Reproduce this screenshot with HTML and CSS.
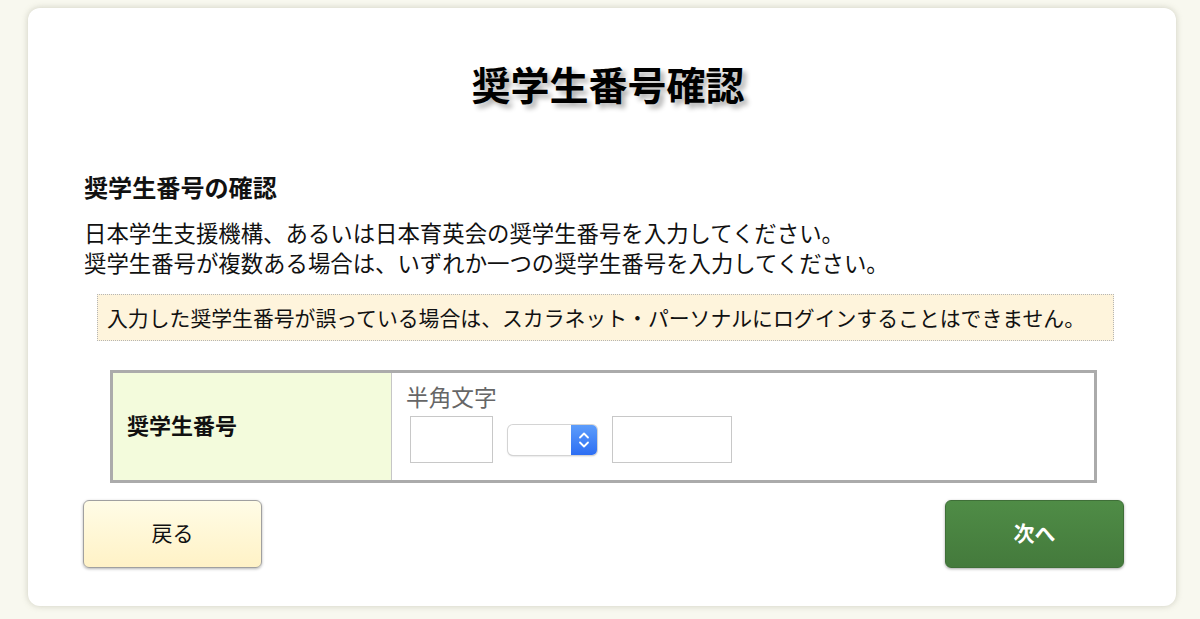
FILE: index.html
```html
<!DOCTYPE html>
<html lang="ja">
<head>
<meta charset="utf-8">
<title>奨学生番号確認</title>
<link rel="stylesheet" href="styles.css">
</head>
<body>
<main class="card">
  <h1 class="title">奨学生番号確認</h1>
  <h2 class="heading">奨学生番号の確認</h2>
  <p class="lead">日本学生支援機構、あるいは日本育英会の奨学生番号を入力してください。<br>奨学生番号が複数ある場合は、いずれか一つの奨学生番号を入力してください。</p>
  <div class="notice">入力した奨学生番号が誤っている場合は、スカラネット・パーソナルにログインすることはできません。</div>
  <div class="form-table">
    <div class="label-cell">奨学生番号</div>
    <div class="field-cell">
      <div class="hint">半角文字</div>
      <div class="inputs">
        <input class="box box-short" type="text">
        <div class="select">
          <span class="select-value"></span>
          <span class="select-btn">
            <svg width="14" height="22" viewBox="0 0 14 22" aria-hidden="true">
              <path d="M3 8.5 L7 4.5 L11 8.5" fill="none" stroke="#fff" stroke-width="1.8" stroke-linecap="round" stroke-linejoin="round"/>
              <path d="M3 13.5 L7 17.5 L11 13.5" fill="none" stroke="#fff" stroke-width="1.8" stroke-linecap="round" stroke-linejoin="round"/>
            </svg>
          </span>
        </div>
        <input class="box box-long" type="text">
      </div>
    </div>
  </div>
  <div class="actions">
    <button class="btn btn-back" type="button">戻る</button>
    <button class="btn btn-next" type="button">次へ</button>
  </div>
</main>
</body>
</html>
```
FILE: styles.css
```css
* { box-sizing: border-box; }
html, body { margin: 0; padding: 0; }
body {
  background: #f8f8ef;
  font-family: "Noto Sans CJK JP", "Noto Sans", sans-serif;
  color: #111;
  height: 619px;
  overflow: hidden;
}
.card {
  width: 1148px;
  margin: 8px 0 0 28px;
  background: #fff;
  border-radius: 12px;
  box-shadow: 0 0 6px rgba(150, 150, 130, 0.45);
  padding: 52px 52px 38px 56px;
}
.title {
  margin: 0;
  text-align: center;
  font-size: 39px;
  line-height: 47px;
  font-weight: 700;
  color: #000;
  text-shadow: 4px 4px 5px #b0b0b0;
  padding-left: 8px;
}
.heading {
  margin: 65px 0 0;
  font-size: 24.1px;
  line-height: 30px;
  font-weight: 700;
}
.lead {
  margin: 15px 0 0;
  font-size: 22.4px;
  line-height: 30px;
}
.notice {
  margin: 17px 10px 0 13px;
  height: 47px;
  background: #fef4dc;
  border: 1px dotted #b5b5b5;
  font-size: 20.85px;
  line-height: 45px;
  padding-left: 9px;
}
.form-table {
  margin: 29px 27px 0 26px;
  height: 113px;
  border: 3px solid #ababab;
  display: flex;
}
.label-cell {
  width: 279px;
  background: #f3fbdc;
  border-right: 1px solid #c6c6c6;
  font-size: 22px;
  font-weight: 700;
  display: flex;
  align-items: center;
  padding-left: 14px;
  padding-bottom: 6px;
}
.field-cell {
  flex: 1;
  padding: 10px 0 0 14px;
}
.hint {
  font-size: 22.7px;
  line-height: 28px;
  color: #666;
}
.inputs {
  margin-top: 5px;
  padding-left: 4px;
  display: flex;
  align-items: center;
}
.box {
  height: 47px;
  border: 1px solid #c8c8c8;
  background: #fff;
  margin: 0;
  padding: 0;
  font: inherit;
}
.box-short { width: 83px; }
.box-long { width: 120px; margin-left: 15px; }
.select {
  margin-left: 15px;
  width: 89px;
  height: 30px;
  border-radius: 5px;
  background: #fff;
  box-shadow: 0 0 0 1px #d4d4d4, 0 1px 2px rgba(0,0,0,0.25);
  display: flex;
  overflow: hidden;
}
.select-value { flex: 1; }
.select-btn {
  width: 26px;
  background: linear-gradient(#5d9dfb, #2d6ef3);
  display: flex;
  align-items: center;
  justify-content: center;
}
.actions {
  margin-top: 17px;
  display: flex;
  justify-content: space-between;
}
.btn {
  width: 179px;
  height: 68px;
  border-radius: 6px;
  font-family: inherit;
  font-size: 21px;
  padding: 0 0 5px;
  cursor: pointer;
}
.btn-back {
  margin-left: -1px;
  background: linear-gradient(#fffce6, #fff2c6);
  border: 1px solid #a0a0a0;
  box-shadow: 0 1px 3px rgba(0,0,0,0.3);
  color: #111;
}
.btn-next {
  background: linear-gradient(#4f8c46, #447a3c);
  border: 1px solid #3f6f38;
  box-shadow: 0 1px 3px rgba(0,0,0,0.35);
  color: #fff;
  font-weight: 700;
}
```
